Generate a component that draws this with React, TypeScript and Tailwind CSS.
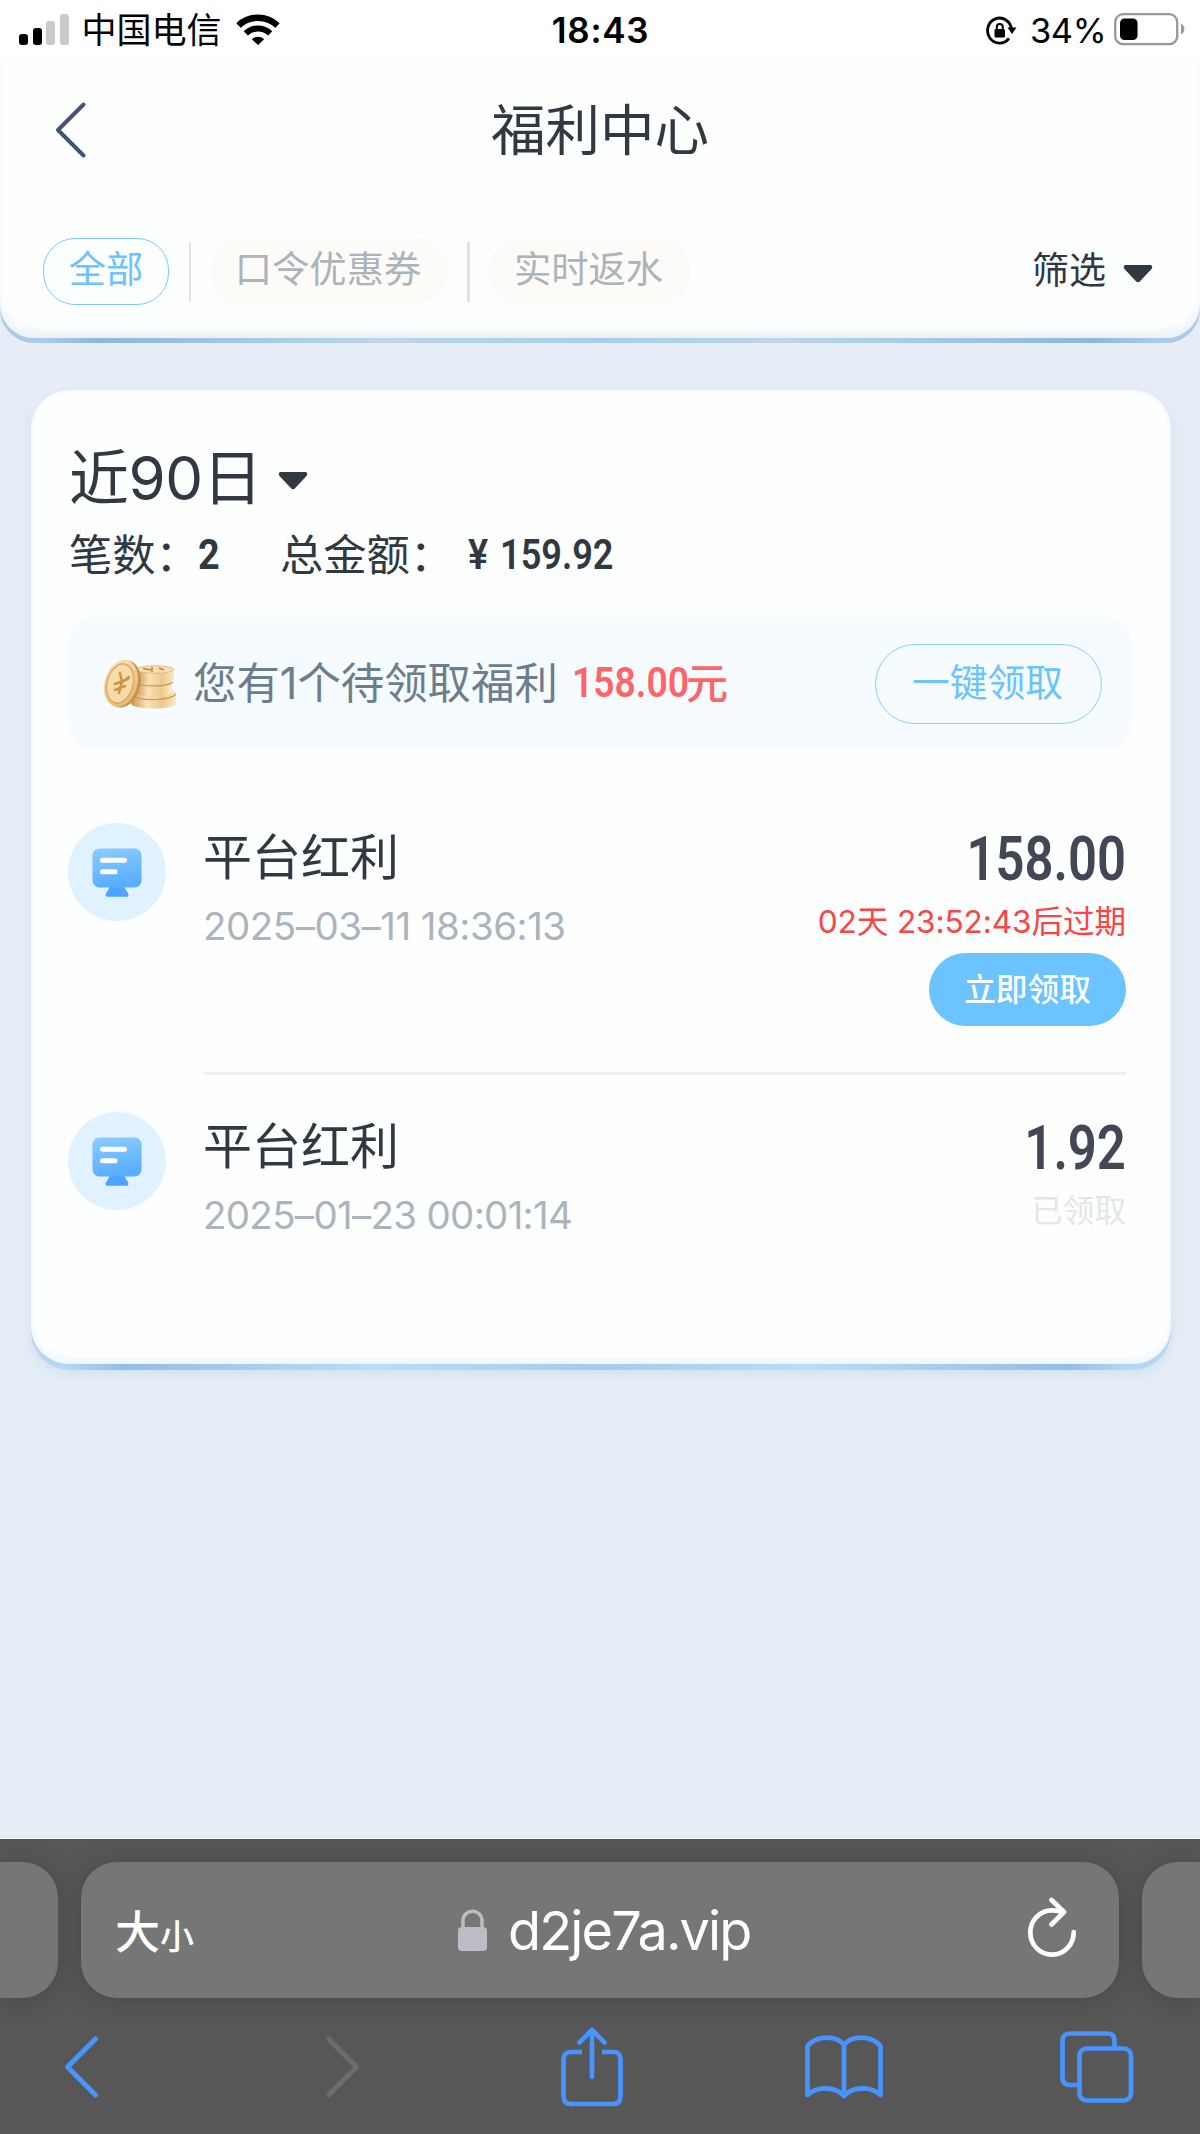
import { clsx } from "clsx";

const tabs = [
  { label: "全部", width: "w-[126px]", active: true },
  { label: "口令优惠券", width: "w-[237px]", active: false },
  { label: "实时返水", width: "w-[201px]", active: false },
];

const records = [
  {
    title: "平台红利",
    time: "2025–03–11 18:36:13",
    timeTracking: "tracking-[-0.5px]",
    amount: "158.00",
    expires: "02天 23:52:43后过期",
  },
  {
    title: "平台红利",
    time: "2025–01–23 00:01:14",
    timeTracking: "tracking-[-0.7px]",
    amount: "1.92",
    expires: null,
  },
];

function Caret({ className }: { className?: string }) {
  return (
    <svg viewBox="0 0 30 19" className={clsx("h-[19px] w-[30px]", className)}>
      <path
        d="M3 1h24c2 0 3 2.200 1.500 3.900L17 17.300c-1.200 1.200-2.800 1.200-4 0L1.500 4.900C0 3.200 1 1 3 1z"
        fill="#303841"
      />
    </svg>
  );
}

function StatusBar() {
  return (
    <div className="flex h-[58px] items-center bg-white pr-[14px] pl-[19px] text-black">
      <div className="flex flex-1 items-center">
        <div className="flex h-[31px] items-end gap-[4.500px]">
          <span className="h-[11px] w-[9px] rounded-[3px] bg-black" />
          <span className="h-[17px] w-[9px] rounded-[3px] bg-black" />
          <span className="h-[24px] w-[9px] rounded-[3px] bg-[#c9c9c9]" />
          <span className="h-[31px] w-[9px] rounded-[3px] bg-[#c9c9c9]" />
        </div>
        <span className="ml-[13px] pt-[2px] text-[35px] leading-[44px]">中国电信</span>
        <svg viewBox="0 0 44 32" className="ml-[14px] h-[32px] w-[44px]" fill="none" stroke="#000">
          <path d="M2.500 12.500a28.500 28.500 0 0 1 39 0" strokeWidth="6.500" />
          <path d="M9.800 20.300a17.700 17.700 0 0 1 24.400 0" strokeWidth="6" />
          <path d="M15.800 26.300a9 9 0 0 1 12.400 0L22 32z" fill="#000" stroke="none" />
        </svg>
      </div>
      <span className="-ml-[4px] pt-[2px] text-[35px] leading-[44px] font-semibold tracking-[0.700px]">18:43</span>
      <div className="flex flex-1 items-center justify-end">
        <svg viewBox="0 0 32 32" className="mt-[2px] h-[32px] w-[32px]" fill="none" stroke="#000" strokeWidth="2.800">
          <path d="M26.500 15.500A12 12.500 0 1 0 24 24.300" />
          <path d="M22.500 13.500h9l-4.500 6.500z" fill="#000" stroke="none" />
          <rect x="9.500" y="15" width="10.500" height="8.500" rx="1.500" fill="#000" stroke="none" />
          <path d="M11.800 16v-3a3 3 0 0 1 6 0v3" strokeWidth="2" />
        </svg>
        <span className="ml-[13px] pt-[3px] text-[34.500px] leading-[44px] tracking-[-0.500px]">34%</span>
        <svg viewBox="0 0 72 34" className="ml-[8px] h-[34px] w-[72px]">
          <rect x="1.200" y="2.200" width="62" height="30" rx="8" fill="none" stroke="#999" strokeWidth="2.300" />
          <rect x="6" y="6.500" width="17.500" height="21.500" rx="4.500" fill="#000" />
          <path d="M67 11.500c4.500 2 4.500 9 0 11z" fill="#999" />
        </svg>
      </div>
    </div>
  );
}

function Header() {
  return (
    <header className="rounded-b-[34px] bg-[linear-gradient(90deg,#a9cbe8_0%,#a9cbe8_4%,#8fb8d8_8%,#bbd6ed_32%,#abcce8_50%,#bbd6ed_65%,#8fb8d8_91%,#a9cbe8_96%)] pb-[5px]">
      <div className="h-[280px] rounded-b-[34px] bg-[#fdfefe] shadow-[inset_0_-10px_12px_-5px_#e4eef5]">
        <div className="grid h-[144px] grid-cols-[1fr_auto_1fr] items-center">
          <svg viewBox="0 0 34 58" className="ml-[54px] h-[58px] w-[34px]" fill="none" stroke="#425379" strokeWidth="4">
            <path d="M29.500 3.500 4 29l25.500 25.500" strokeLinecap="round" strokeLinejoin="round" />
          </svg>
          <h1 className="text-[54.500px] leading-[64px] text-[#303841]">福利中心</h1>
        </div>
        <div className="flex items-center pt-[36px] pr-[47px] pl-[43px]">
          {tabs.map((tab, i) => (
            <div key={tab.label} className="flex items-center">
              {i > 0 && <span className="mx-[19.500px] h-[60px] w-[2.500px] bg-[#dfe2e6]" />}
              <button
                className={clsx(
                  "h-[67px] rounded-[32px] pb-[3px] text-[37.300px] leading-[60px]",
                  tab.width,
                  tab.active
                    ? "border-[1.500px] border-[#7ccbff] text-[#6bc3ff]"
                    : "bg-[#fdfbf8] pr-[2px] text-[#abb3bb]",
                )}
              >
                {tab.label}
              </button>
            </div>
          ))}
          <button className="ml-auto flex items-center text-[37px] leading-[60px] text-[#303841]">
            <span className="pb-[2px]">筛选</span>
            <Caret className="mt-[3px] ml-[17px]" />
          </button>
        </div>
      </div>
    </header>
  );
}

function Coins() {
  return (
    <svg viewBox="0 0 74 50" className="h-[50px] w-[74px]">
      <defs>
        <linearGradient id="side" x1="0" x2="1">
          <stop offset="0" stopColor="#c8924e" />
          <stop offset="0.350" stopColor="#f9e2b6" />
          <stop offset="0.700" stopColor="#eec98c" />
          <stop offset="1" stopColor="#fbe9c8" />
        </linearGradient>
        <linearGradient id="face" x1="0" y1="0" x2="1" y2="1">
          <stop offset="0" stopColor="#fbe9c6" />
          <stop offset="1" stopColor="#e3b165" />
        </linearGradient>
      </defs>
      <path d="M28 36v9c4 6 40 6 45 0V33c-5-5-41-5-45 3z" fill="url(#side)" />
      <path d="M30 37c8 5 37 5 43-2" fill="none" stroke="#c99a59" strokeWidth="1.200" />
      <path d="M32 23v11c7 5 31 4 37 0V23z" fill="url(#side)" />
      <path d="M32 24c7 4 32 4 38-1" fill="none" stroke="#c99a59" strokeWidth="1.200" />
      <path d="M33 10v12c7 4 33 4 38-1V10z" fill="url(#side)" />
      <ellipse cx="52" cy="10.500" rx="19" ry="3.800" fill="#f8dfb0" stroke="#dfb373" strokeWidth="0.800" />
      <path d="M40 9.500l8 1.500M49 8v5M56 9l5 2" stroke="#c07f48" strokeWidth="1.500" />
      <ellipse cx="20.500" cy="25" rx="16.500" ry="24" transform="rotate(15 20.500 25)" fill="#c98f48" />
      <ellipse cx="18" cy="24.300" rx="16.500" ry="24" transform="rotate(15 18 24.300)" fill="url(#face)" />
      <ellipse cx="17" cy="24.500" rx="13" ry="20" transform="rotate(15 17 24.500)" fill="#f6dcab" stroke="#dba963" strokeWidth="1.500" />
      <path d="M17 14l2 9 7-5M12 25l13-5M12 31l10-4M19 22l-3 12" fill="none" stroke="#cd9448" strokeWidth="2.500" strokeLinecap="round" />
    </svg>
  );
}

function RecordIcon() {
  return (
    <svg viewBox="0 0 98 98" className="h-[98px] w-[98px] shrink-0">
      <defs>
        <linearGradient id="screen" x1="0" y1="0" x2="0.200" y2="1">
          <stop offset="0" stopColor="#8acdff" />
          <stop offset="1" stopColor="#5badff" />
        </linearGradient>
      </defs>
      <circle cx="49" cy="49" r="49" fill="#e0f2ff" />
      <path d="M41.500 63h15c0 4 4 6 4 9 0 1-1 1.800-2 1.800h-19c-1 0-2-.8-2-1.800 0-3 4-5 4-9z" fill="#4ca4ff" />
      <rect x="24.500" y="25.500" width="49" height="39" rx="7" fill="url(#screen)" />
      <path d="M34.500 37.300h22M34.500 48.800h12.500" stroke="#fff" strokeWidth="5" strokeLinecap="round" />
    </svg>
  );
}

function SummaryCard() {
  return (
    <main className="mt-[47px] mr-[29px] ml-[31px] rounded-[38px] bg-[linear-gradient(90deg,#b5d7f4_0%,#b5d7f4_3%,#94bee3_8%,#bddcf6_30%,#a6cbeb_50%,#bddcf6_68%,#94bee3_91%,#b5d7f4_96%)] pb-[6px] shadow-[0_4px_12px_#d0e0f0]">
      <div className="h-[974px] rounded-[38px] bg-[#fdfefe] pt-[52px] pr-[39px] pl-[38px] shadow-[inset_0_-8px_10px_-4px_#eaf5fd,inset_0_0_5px_#edf5fc]">
        <div className="flex h-[72px] items-center text-[60px] leading-[72px] text-[#303841]">
          <span className="w-[191px] tracking-[-0.500px] whitespace-nowrap">近90日</span>
          <Caret className="mt-[4px] ml-[18px]" />
        </div>
        <div className="flex h-[76px] items-center pt-[5px] text-[43.300px] leading-[56px] whitespace-nowrap text-[#303841]">
          <span className="w-[129px]">笔数：</span>
          <span className="w-[82px] origin-left scale-x-90 font-[Roboto] text-[42px] font-bold">2</span>
          <span className="w-[188px]">总金额：</span>
          <span className="w-[32px] origin-left scale-x-90 font-[Roboto] text-[42px] font-semibold">¥</span>
          <span className="origin-left scale-x-86 font-[Roboto] text-[42px] font-semibold">159.92</span>
        </div>

        <div className="mt-[27px] -ml-px flex h-[133px] items-center rounded-[26px] bg-[#f5fbff] pr-[30px] pl-[35px] whitespace-nowrap">
          <Coins />
          <span className="ml-[16px] w-[379px] text-[43.400px] text-[#6c7d8c]">您有1个待领取福利</span>
          <span className="w-[114px] origin-left scale-x-86 font-[Roboto] text-[43.300px] font-semibold text-[#ff6467]">
            158.00
          </span>
          <span className="text-[42px] font-medium text-[#ff6467]">元</span>
          <button className="ml-auto h-[80px] w-[227px] rounded-full border-[1.500px] border-[#8bd0ff] pr-[2px] pb-[3px] text-[37.700px] text-[#6bc3ff]">
            一键领取
          </button>
        </div>

        <ul className="mt-[73px] -ml-px">
          {records.map((record, i) => (
            <li key={record.amount} className="flex h-[289px]">
              <RecordIcon />
              <div
                className={clsx(
                  "mr-[6px] ml-[37px] flex flex-1 justify-between",
                  i === 0 && "mb-[37px] border-b-[3px] border-[#f0f0f3]",
                )}
              >
                <div className="whitespace-nowrap">
                  <h2 className="h-[68px] text-[49px] leading-[70px] text-[#303841]">{record.title}</h2>
                  <p className={clsx("h-[68px] text-[38.500px] leading-[70px] text-[#abb4bd]", record.timeTracking)}>
                    {record.time}
                  </p>
                </div>
                <div className="flex flex-col items-end whitespace-nowrap">
                  <strong className="h-[72px] origin-right scale-x-84 font-[Roboto] text-[60.500px] leading-[73px] font-semibold text-[#424756]">
                    {record.amount}
                  </strong>
                  {record.expires ? (
                    <>
                      <span className="h-[58px] text-[31.600px] leading-[54px] tracking-[-0.100px] text-[#fc4345]">{record.expires}</span>
                      <button className="h-[73px] w-[197px] rounded-full bg-[#6bc3ff] text-[31.700px] font-medium text-white">
                        立即领取
                      </button>
                    </>
                  ) : (
                    <span className="text-[31.600px] leading-[54px] text-[#e3e6ea]">已领取</span>
                  )}
                </div>
              </div>
            </li>
          ))}
        </ul>
      </div>
    </main>
  );
}

function BrowserBar() {
  return (
    <footer className="mt-auto h-[296px] overflow-hidden border-t border-white bg-[#575757]">
      <div className="flex h-[160px] gap-[23px] pt-[23px]">
        <div className="h-[136px] w-[58px] shrink-0 rounded-r-[36px] bg-[#767676] shadow-[0_2px_22px_#484848]" />
        <div className="flex h-[136px] w-[1038px] shrink-0 items-center rounded-[36px] bg-[#767676] pr-[42px] pl-[34px] text-white shadow-[0_2px_22px_#484848]">
          <div className="flex w-[343px] items-baseline pt-[5px] font-medium">
            <span className="text-[45px]">大</span>
            <span className="text-[34px]">小</span>
          </div>
          <svg viewBox="0 0 29 42" className="h-[42px] w-[29px]">
            <rect y="18" width="29" height="24" rx="4" fill="#bdbcc4" />
            <path d="M5 20V12c0-13 19-13 19 0v8" fill="none" stroke="#bdbcc4" strokeWidth="3.500" />
          </svg>
          <span className="ml-[21px] pt-[2px] text-[54px] leading-[70px] tracking-[-1.850px]">d2je7a.vip</span>
          <svg viewBox="0 0 50 62" className="mb-[5px] ml-auto h-[62px] w-[50px]" fill="none" stroke="#fff" strokeWidth="4.700" strokeLinecap="round" strokeLinejoin="round">
            <path d="M46.700 35A21.700 22.200 0 1 1 25 13.300c4 0 8 .6 12 1.700" />
            <path d="M24.500 3 37 15 24.500 27.500" />
          </svg>
        </div>
        <div className="h-[136px] w-[58px] shrink-0 rounded-l-[36px] bg-[#767676] shadow-[0_2px_22px_#484848]" />
      </div>
      <nav className="flex h-[135px] items-center pt-[1px] pl-[62px]">
        <svg viewBox="0 0 38 64" className="h-[66px] w-[38px]" fill="none" stroke="#4794ff" strokeWidth="5" strokeLinecap="round" strokeLinejoin="round">
          <path d="M33.500 4 5.500 32l28 28" />
        </svg>
        <svg viewBox="0 0 38 64" className="ml-[224px] h-[66px] w-[38px]" fill="none" stroke="#6c6c6c" strokeWidth="5" strokeLinecap="round" strokeLinejoin="round">
          <path d="M4.500 4 32.500 32l-28 28" />
        </svg>
        <svg viewBox="0 0 62 80" className="mb-px ml-[199px] h-[80px] w-[62px]" fill="none" stroke="#4794ff" strokeWidth="4.700" strokeLinecap="round" strokeLinejoin="round">
          <path d="M21 25H10c-5 0-7.500 2.500-7.500 7.500v37C2.500 74.500 5 77 10 77h42c5 0 7.500-2.500 7.500-7.500v-37C59.500 27.500 57 25 52 25H41" strokeLinecap="butt" />
          <path d="M31 50V4M18.500 15.500 31 3l12.500 12.500" />
        </svg>
        <svg viewBox="0 0 78 66" className="ml-[182px] h-[66px] w-[78px]" fill="none" stroke="#4794ff" strokeWidth="4.700" strokeLinecap="round" strokeLinejoin="round">
          <path d="M39 11C31 1 12 1 2.500 12v49C12 52 30 52 39 62c9-10 27-10 36.500-1V12C66 1 47 1 39 11zv51" />
        </svg>
        <svg viewBox="0 0 74 72" className="ml-[177px] h-[72px] w-[74px]" fill="none" stroke="#4794ff" strokeWidth="4.700">
          <path d="M18 54h-8c-5 0-7.500-2.500-7.500-7.500V10C2.500 5 5 2.500 10 2.500h37c5 0 7.500 2.500 7.500 7.500v7" />
          <rect x="19.500" y="17.500" width="51.500" height="52" rx="7" />
        </svg>
      </nav>
    </footer>
  );
}

export default function App() {
  return (
    <div className="flex h-[2134px] w-[1200px] flex-col overflow-hidden bg-[#e6edf6] font-[Inter,'Noto_Sans_CJK_SC',sans-serif]">
      <StatusBar />
      <Header />
      <SummaryCard />
      <BrowserBar />
    </div>
  );
}
